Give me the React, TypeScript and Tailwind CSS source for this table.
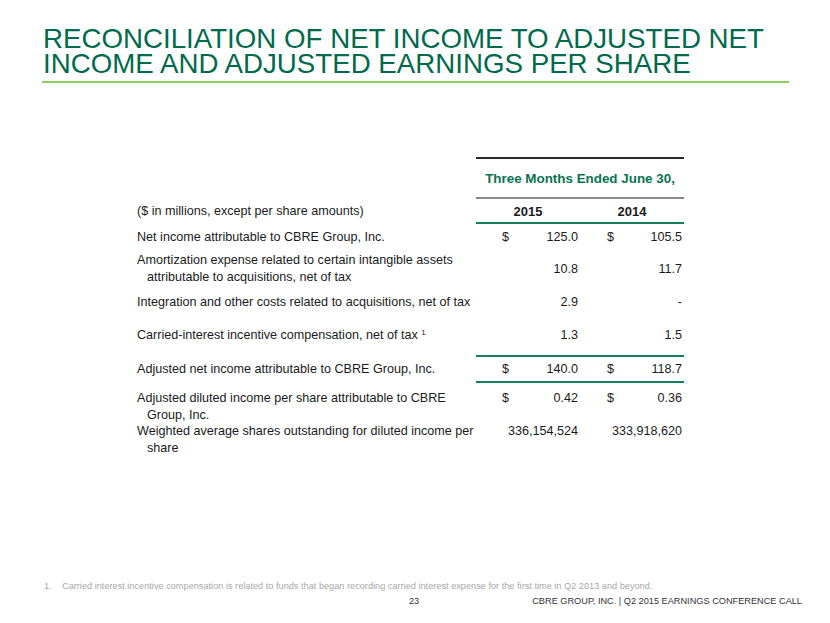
import React from "react";

type Cell = { dollar?: boolean; value: string };

function Num({ c, first }: { c: Cell; first: boolean }) {
  return (
    <div className={`flex w-[104px] items-center justify-between pr-[2px] ${first ? "pl-[26px]" : "pl-[27px]"}`}>
      <span>{c.dollar ? "$" : ""}</span>
      <span>{c.value}</span>
    </div>
  );
}

export default function App() {
  const font = { fontFamily: '"Liberation Sans", Arial, sans-serif' };
  return (
    <div className="relative flex h-[623px] w-[830px] flex-col bg-white" style={font}>
      {/* Title */}
      <div className="pl-[43px] pt-[27px] text-[27.7px] leading-[24.5px] text-[#006a4d]">
        <div>RECONCILIATION OF NET INCOME TO ADJUSTED NET</div>
        <div>INCOME AND ADJUSTED EARNINGS PER SHARE</div>
      </div>
      <div className="ml-[42px] mt-[5px] h-[2px] w-[747px] bg-[#8ccf5c]" />

      {/* Table */}
      <div className="ml-[137px] mt-[74px] flex flex-col text-[12.6px] leading-[17px] text-[#1a1a1a]">
        {/* Group header */}
        <div className="flex">
          <div className="w-[339px]" />
          <div className="flex h-[42px] w-[208px] items-center justify-center border-y-2 border-t-[#2a2a2a] border-b-[#8a8a8a] text-[13.4px] font-bold text-[#0b7350]">
            Three Months Ended June 30,
          </div>
        </div>
        {/* Column header */}
        <div className="flex h-[25px]">
          <div className="w-[339px] pt-[4px]">($ in millions, except per share amounts)</div>
          <div className="flex w-[208px] border-b-2 border-[#13805a] pt-[4px] text-[13px] font-bold">
            <div className="w-[104px] text-center">2015</div>
            <div className="w-[104px] text-center">2014</div>
          </div>
        </div>
        {/* Net income */}
        <div className="flex h-[26px] items-center">
          <div className="w-[339px]">Net income attributable to CBRE Group, Inc.</div>
          <Num c={{ dollar: true, value: "125.0" }} first />
          <Num c={{ dollar: true, value: "105.5" }} first={false} />
        </div>
        {/* Amortization */}
        <div className="flex h-[38px] items-center">
          <div className="w-[339px] whitespace-nowrap">
            Amortization expense related to certain intangible assets
            <br />
            <span className="pl-[10px]">attributable to acquisitions, net of tax</span>
          </div>
          <Num c={{ value: "10.8" }} first />
          <Num c={{ value: "11.7" }} first={false} />
        </div>
        {/* Integration */}
        <div className="flex h-[28px] items-center">
          <div className="w-[339px] whitespace-nowrap">Integration and other costs related to acquisitions, net of tax</div>
          <Num c={{ value: "2.9" }} first />
          <Num c={{ value: "-" }} first={false} />
        </div>
        {/* Carried */}
        <div className="flex h-[39px] items-center">
          <div className="w-[339px] whitespace-nowrap">
            Carried-interest incentive compensation, net of tax{" "}
            <span className="relative -top-[4px] text-[8px]">1</span>
          </div>
          <Num c={{ value: "1.3" }} first />
          <Num c={{ value: "1.5" }} first={false} />
        </div>
        {/* Adjusted net income */}
        <div className="flex">
          <div className="flex w-[339px] items-center">Adjusted net income attributable to CBRE Group, Inc.</div>
          <div className="flex h-[28px] w-[208px] items-center border-y-2 border-[#13805a]">
            <Num c={{ dollar: true, value: "140.0" }} first />
            <Num c={{ dollar: true, value: "118.7" }} first={false} />
          </div>
        </div>
        {/* Adjusted diluted */}
        <div className="flex items-start pt-[7px]">
          <div className="w-[339px] whitespace-nowrap">
            Adjusted diluted income per share attributable to CBRE
            <br />
            <span className="pl-[10px]">Group, Inc.</span>
          </div>
          <Num c={{ dollar: true, value: "0.42" }} first />
          <Num c={{ dollar: true, value: "0.36" }} first={false} />
        </div>
        {/* Weighted */}
        <div className="-mt-[1px] flex items-start">
          <div className="w-[339px] whitespace-nowrap">
            Weighted average shares outstanding for diluted income per
            <br />
            <span className="pl-[10px]">share</span>
          </div>
          <Num c={{ value: "336,154,524" }} first />
          <Num c={{ value: "333,918,620" }} first={false} />
        </div>
      </div>

      {/* Footnote & footer */}
      <div className="mt-auto pb-[16px]">
        <div className="flex pl-[44px] text-[9.2px] leading-[12px] text-[#a8a8a8]">
          <span className="w-[18px]">1.</span>
          <span>
            Carried interest incentive compensation is related to funds that began recording carried interest expense for the first time in Q2 2013 and beyond.
          </span>
        </div>
        <div className="mt-[3px] flex pl-[409px] text-[9.2px] leading-[12px] text-[#333333]">
          <span>23</span>
          <span className="ml-[113px]">CBRE GROUP, INC. | Q2 2015 EARNINGS CONFERENCE CALL</span>
        </div>
      </div>
    </div>
  );
}
